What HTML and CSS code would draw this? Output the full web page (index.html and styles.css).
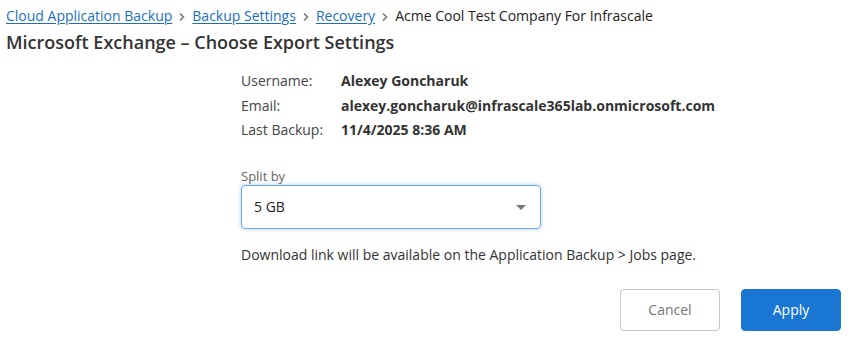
FILE: index.html
```html
<!DOCTYPE html>
<html>
<head>
<meta charset="utf-8">
<link rel="stylesheet" href="styles.css">
</head>
<body>
<div class="page">
  <nav class="crumbs">
    <a href="#">Cloud Application Backup</a>
    <span class="sep"><svg width="8" height="10" viewBox="0 0 8 10"><path d="M2 1.5 L5.5 5 L2 8.5" fill="none" stroke="#777" stroke-width="1.6"/></svg></span>
    <a href="#">Backup Settings</a>
    <span class="sep"><svg width="8" height="10" viewBox="0 0 8 10"><path d="M2 1.5 L5.5 5 L2 8.5" fill="none" stroke="#777" stroke-width="1.6"/></svg></span>
    <a href="#">Recovery</a>
    <span class="sep"><svg width="8" height="10" viewBox="0 0 8 10"><path d="M2 1.5 L5.5 5 L2 8.5" fill="none" stroke="#777" stroke-width="1.6"/></svg></span>
    <span class="current">Acme Cool Test Company For Infrascale</span>
  </nav>
  <h1 class="title">Microsoft Exchange – Choose Export Settings</h1>

  <div class="form">
    <div class="info">
      <div class="label">Username:</div><div class="value">Alexey Goncharuk</div>
      <div class="label">Email:</div><div class="value">alexey.goncharuk@infrascale365lab.onmicrosoft.com</div>
      <div class="label">Last Backup:</div><div class="value">11/4/2025 8:36 AM</div>
    </div>

    <div class="field">
      <div class="field-label">Split by</div>
      <div class="select">
        <span>5 GB</span>
        <svg class="caret" width="12" height="7" viewBox="0 0 12 7"><path d="M1 1 L11 1 L6 6 Z" fill="#777"/></svg>
      </div>
    </div>

    <p class="note">Download link will be available on the Application Backup &gt; Jobs page.</p>
  </div>

  <div class="actions">
    <button class="btn btn-cancel">Cancel</button>
    <button class="btn btn-apply">Apply</button>
  </div>
</div>
</body>
</html>
```

FILE: styles.css
```css
html, body {
  margin: 0;
  padding: 0;
  background: #fff;
}
body {
  font-family: "Open Sans", "Noto Sans", sans-serif;
  color: #333;
  font-size: 14px;
}
.page {
  padding: 6px 11px 0 6px;
}
.crumbs {
  display: flex;
  align-items: center;
  height: 20px;
  line-height: 20px;
  font-size: 14px;
}
.crumbs a {
  color: #1a6fc4;
  text-decoration: underline;
  text-underline-offset: 2px;
}
.crumbs .sep {
  display: inline-flex;
  align-items: center;
  width: 20px;
  justify-content: center;
  padding-top: 1px;
}
.crumbs .current {
  color: #222;
}
.title {
  margin: 4px 0 0 0;
  font-size: 18px;
  font-weight: 600;
  line-height: 24px;
  color: #333;
}
.form {
  margin-left: 235px;
  padding-top: 15px;
}
.info {
  display: grid;
  grid-template-columns: 100px auto;
  grid-auto-rows: 24.5px;
  align-items: center;
  line-height: 20px;
}
.label {
  color: #444;
}
.value {
  font-weight: 700;
  color: #333;
}
.field {
  margin-top: 24px;
}
.field-label {
  font-size: 13px;
  color: #666;
  line-height: 18px;
}
.select {
  box-sizing: border-box;
  width: 300px;
  height: 44px;
  border: 1px solid #6aa8e6;
  border-radius: 4px;
  box-shadow: 0 0 4px rgba(80, 150, 230, 0.45);
  display: flex;
  align-items: center;
  justify-content: space-between;
  padding: 0 13px 0 12px;
  margin-top: 0;
  color: #222;
  font-size: 14px;
}
.caret {
  display: block;
  margin-top: 2px;
}
.note {
  margin: 16px 0 0 0;
  line-height: 20px;
  color: #333;
}
.actions {
  display: flex;
  justify-content: flex-end;
  gap: 21px;
  margin-top: 24px;
}
.btn {
  width: 100px;
  height: 42px;
  border-radius: 4px;
  font-family: "Open Sans", "Noto Sans", sans-serif;
  font-size: 14px;
  cursor: pointer;
}
.btn-cancel {
  background: #fff;
  border: 1px solid #c6c6c6;
  color: #777;
}
.btn-apply {
  background: #1976d2;
  border: 1px solid #1976d2;
  color: #fff;
}
```
